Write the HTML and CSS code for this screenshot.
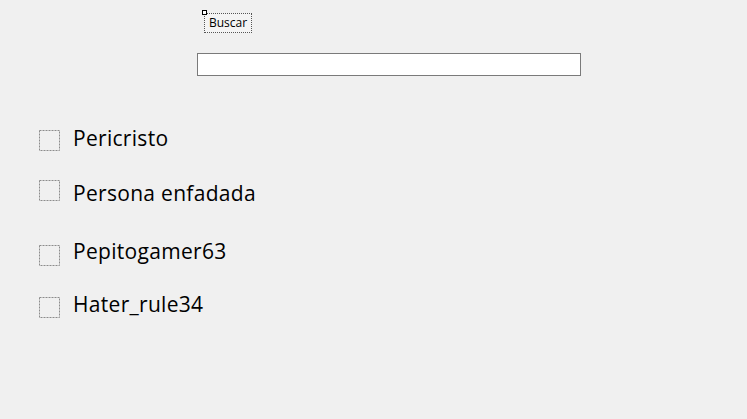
FILE: index.html
```html
<!DOCTYPE html>
<html lang="es">
<head>
<meta charset="utf-8">
<title>Form1</title>
<link rel="stylesheet" href="styles.css">
</head>
<body>
<main class="form">
  <section class="search">
    <div class="btn-wrap">
      <button class="btn" type="button">Buscar</button>
      <span class="handle"></span>
    </div>
    <input class="field" type="text">
  </section>
  <section class="list">
    <label class="item item-1">
      <svg class="box" width="21" height="21" viewBox="0 0 21 21"><rect x="0.5" y="0.5" width="20" height="20" fill="none" stroke="#8c8c8c" stroke-width="1" stroke-dasharray="2 1"/></svg>
      <span class="text">Pericristo</span>
    </label>
    <label class="item item-2">
      <svg class="box" width="21" height="21" viewBox="0 0 21 21"><rect x="0.5" y="0.5" width="20" height="20" fill="none" stroke="#8c8c8c" stroke-width="1" stroke-dasharray="2 1"/></svg>
      <span class="text">Persona enfadada</span>
    </label>
    <label class="item item-3">
      <svg class="box" width="21" height="21" viewBox="0 0 21 21"><rect x="0.5" y="0.5" width="20" height="20" fill="none" stroke="#8c8c8c" stroke-width="1" stroke-dasharray="2 1"/></svg>
      <span class="text">Pepitogamer63</span>
    </label>
    <label class="item item-4">
      <svg class="box" width="21" height="21" viewBox="0 0 21 21"><rect x="0.5" y="0.5" width="20" height="20" fill="none" stroke="#8c8c8c" stroke-width="1" stroke-dasharray="2 1"/></svg>
      <span class="text">Hater_rule34</span>
    </label>
  </section>
</main>
</body>
</html>
```

FILE: styles.css
```css
html, body {
  margin: 0;
  padding: 0;
  background: #f0f0f0;
  width: 747px;
  height: 419px;
  overflow: hidden;
}

.form {
  display: flex;
  flex-direction: column;
  font-family: "Open Sans", "Noto Sans", sans-serif;
  color: #000;
}

.search {
  display: flex;
  flex-direction: column;
  align-items: flex-start;
  padding: 13px 0 0 197px;
}

.btn-wrap {
  position: relative;
  margin-left: 7px;
}

.btn {
  display: block;
  width: 48px;
  height: 20px;
  margin: 0;
  padding: 0 0 1px;
  border: 1px dotted #555;
  background: #f4f4f4;
  font-family: "Open Sans", "Noto Sans", sans-serif;
  font-size: 12px;
  line-height: 17px;
  color: #000;
  text-align: center;
}

.handle {
  position: absolute;
  left: -2px;
  top: -3px;
  width: 3px;
  height: 3px;
  border: 1px solid #000;
  background: #fff;
}

.field {
  display: block;
  box-sizing: border-box;
  width: 384px;
  height: 23px;
  margin: 20px 0 0;
  padding: 0;
  border: 1px solid #7a7a7a;
  background: #fff;
  outline: none;
}

.list {
  display: flex;
  flex-direction: column;
  padding: 0 0 0 39px;
}

.item {
  display: flex;
  align-items: flex-start;
  gap: 13px;
  height: 21px;
  font-size: 21px;
  line-height: 24px;
  letter-spacing: 0.3px;
}

.box {
  display: block;
  flex: none;
}

.text {
  display: block;
  white-space: nowrap;
}

.item-1 { margin-top: 54px; }
.item-1 .text { margin-top: -4px; }
.item-2 { margin-top: 29px; }
.item-2 .text { margin-top: 1px; }
.item-3 { margin-top: 44px; }
.item-3 .text { margin-top: -6px; }
.item-4 { margin-top: 31px; }
.item-4 .text { margin-top: -5px; }
```
